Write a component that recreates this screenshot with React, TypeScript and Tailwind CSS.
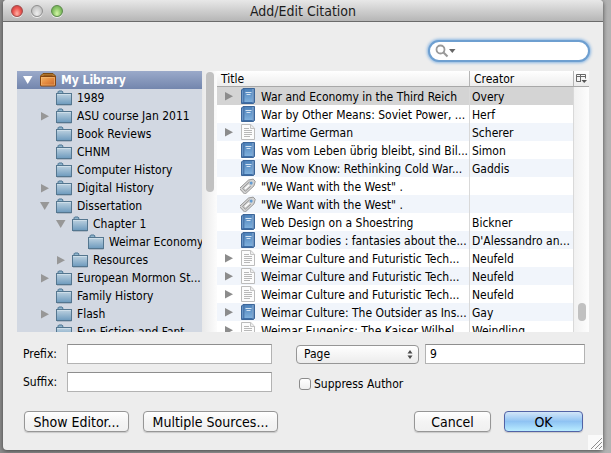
import { useState } from "react";

type Kind = "book" | "doc" | "clip";
type Twisty = "open" | "closed" | null;

const collections: { name: string; depth: number; twisty: Twisty }[] = [
  { name: "1989", depth: 1, twisty: null },
  { name: "ASU course Jan 2011", depth: 1, twisty: "closed" },
  { name: "Book Reviews", depth: 1, twisty: null },
  { name: "CHNM", depth: 1, twisty: null },
  { name: "Computer History", depth: 1, twisty: null },
  { name: "Digital History", depth: 1, twisty: "closed" },
  { name: "Dissertation", depth: 1, twisty: "open" },
  { name: "Chapter 1", depth: 2, twisty: "open" },
  { name: "Weimar Economy", depth: 3, twisty: null },
  { name: "Resources", depth: 2, twisty: "closed" },
  { name: "European Mormon St...", depth: 1, twisty: "closed" },
  { name: "Family History", depth: 1, twisty: null },
  { name: "Flash", depth: 1, twisty: "closed" },
  { name: "Fun Fiction and Fant...", depth: 1, twisty: null },
];

const items: { title: string; creator: string; kind: Kind; parent?: boolean }[] = [
  { title: "War and Economy in the Third Reich", creator: "Overy", kind: "book", parent: true },
  { title: "War by Other Means: Soviet Power, ...", creator: "Herf", kind: "book" },
  { title: "Wartime German", creator: "Scherer", kind: "doc", parent: true },
  { title: "Was vom Leben übrig bleibt, sind Bil...", creator: "Simon", kind: "book" },
  { title: "We Now Know: Rethinking Cold War...", creator: "Gaddis", kind: "book" },
  { title: '"We Want with the West" .', creator: "", kind: "clip" },
  { title: '"We Want with the West" .', creator: "", kind: "clip" },
  { title: "Web Design on a Shoestring", creator: "Bickner", kind: "book" },
  { title: "Weimar bodies : fantasies about the...", creator: "D'Alessandro an...", kind: "book" },
  { title: "Weimar Culture and Futuristic Tech...", creator: "Neufeld", kind: "doc", parent: true },
  { title: "Weimar Culture and Futuristic Tech...", creator: "Neufeld", kind: "doc", parent: true },
  { title: "Weimar Culture and Futuristic Tech...", creator: "Neufeld", kind: "doc", parent: true },
  { title: "Weimar Culture: The Outsider as Ins...", creator: "Gay", kind: "book", parent: true },
  { title: "Weimar Eugenics: The Kaiser Wilhel...", creator: "Weindling", kind: "doc", parent: true },
];

const indents: Record<number, string> = { 1: "pl-[20px]", 2: "pl-[36px]", 3: "pl-[52px]" };

function Triangle({ state, color }: { state: Twisty; color: string }) {
  return (
    <svg className="h-[16px] w-[16px] shrink-0" viewBox="0 0 16 16" aria-hidden="true">
      {state === "open" && <path d="M3 4h9.5L7.7 12z" fill={color} />}
      {state === "closed" && <path d="M4 4v8.5L12 8.2z" fill={color} />}
    </svg>
  );
}

function Folder() {
  return (
    <svg className="h-[16px] w-[16px] shrink-0" viewBox="0 0 16 16" aria-hidden="true">
      <path d="M1 15.5h14.5" stroke="#aeb9c6" />
      <path d="M2 3.5V1.8l.8-.8H6l.8.8v1.7" fill="#8fb5cd" stroke="#4c7492" />
      <rect x=".5" y="3.5" width="15" height="11" fill="url(#folder)" stroke="#54768f" />
      <path d="M1.2 4.5h13.6" stroke="#d3e2ec" strokeWidth=".8" />
    </svg>
  );
}

function LibraryBox() {
  return (
    <svg className="h-[16px] w-[16px] shrink-0" viewBox="0 0 16 16" aria-hidden="true">
      <path d="M3 1.5h10L15.5 4v1.5H.5V4z" fill="#b7792f" stroke="#7b4a12" />
      <path d="M3.5 3.3h9" stroke="#8d5719" />
      <rect x=".5" y="4.5" width="15" height="9.5" rx=".6" fill="url(#box)" stroke="#85440f" />
      <path d="M1.5 5.5h13v7.5h-13z" fill="none" stroke="#f3bd78" strokeWidth=".6" />
    </svg>
  );
}

function ItemIcon({ kind }: { kind: Kind }) {
  return (
    <svg className="h-[16px] w-[16px] shrink-0" viewBox="0 0 16 16" aria-hidden="true">
      {kind === "book" && (
        <g>
          <path d="M3 .5h11.500v14l-1 1h-12V2z" fill="#3d6da6" stroke="#3c6699" />
          <path d="M2 2.500 3.500 1v13L2 14.500z" fill="#6c98c8" />
          <path d="M4 1h8.500v13H4z" fill="url(#book)" />
          <path d="M4 1v13.500" stroke="#3a659b" strokeWidth=".6" />
          <path d="M13 1v13.500" stroke="#a6c3e2" strokeWidth=".9" />
          <path d="M5.500 4.500h6M6.500 6.500h4" stroke="#e2edf8" strokeWidth=".9" />
        </g>
      )}
      {kind === "doc" && (
        <g>
          <path d="M1.500.5h9.300l3.700 3.700v11.300h-13z" fill="#fcfcfc" stroke="#bcbcbc" />
          <path d="M10.500.8v3.700h3.700" fill="#eeeeee" stroke="#c4c4c4" />
          <path d="M4 4.500h5M4 6.500h8M4 8.500h8M4 10.500h8M4 12.500h6" stroke="#b0b0b0" strokeWidth=".9" />
        </g>
      )}
      {kind === "clip" && (
        <g transform="rotate(-43 8 8)">
          <path d="M0 4h12.500L16.500 6.500v3L12.500 12H0z" fill="#d2d2d2" stroke="#949494" strokeWidth=".9" />
          <path d="M12 6H2.500v4H10" fill="none" stroke="#8a8a8a" strokeWidth=".8" />
          <path d="M4 8h5.500" stroke="#ffffff" strokeWidth="1.500" />
          <circle cx="12.300" cy="8" r="1.500" fill="#629bd2" />
        </g>
      )}
    </svg>
  );
}

function Gradients() {
  return (
    <svg className="absolute h-0 w-0" aria-hidden="true">
      <defs>
        <linearGradient id="folder" x2="0" y2="1">
          <stop stopColor="#bfd3e1" />
          <stop offset="1" stopColor="#6d9abd" />
        </linearGradient>
        <linearGradient id="box" x2="1" y2="1">
          <stop stopColor="#f3b86a" />
          <stop offset=".5" stopColor="#e48a40" />
          <stop offset="1" stopColor="#c2642b" />
        </linearGradient>
        <linearGradient id="book" x2="0" y2="1">
          <stop stopColor="#4d82bb" />
          <stop offset="1" stopColor="#7fb0dc" />
        </linearGradient>
      </defs>
    </svg>
  );
}

function TitleBar() {
  const light = "h-[12px] w-[12px] rounded-full border shadow-[0_1px_0_#eeeeee]";
  return (
    <header className="grid h-[22px] shrink-0 grid-cols-[1fr_auto_1fr] items-center rounded-t-[4px] border-b border-[#6b6b6b] bg-linear-to-b from-[#e8e8e8] to-[#b6b6b6] px-2">
      <div className="flex gap-2">
        <button aria-label="Close" className={`${light} border-[#a14a49] bg-radial-[at_50%_75%] from-[#ffb1a5] via-[#ee5b55] to-[#b92f31]`} />
        <button aria-label="Minimize" className={`${light} border-[#8f8f8f] bg-radial-[at_50%_75%] from-[#efefef] via-[#d0d0d0] to-[#b0b0b0]`} />
        <button aria-label="Zoom" className={`${light} border-[#5b8a4a] bg-radial-[at_50%_75%] from-[#d5f7a8] via-[#8fc96b] to-[#5a9a43]`} />
      </div>
      <h1 className="text-[14px] leading-[20px] text-[#1c1c1c]">Add/Edit Citation</h1>
    </header>
  );
}

function LibraryTree() {
  return (
    <div className="flex w-[200px] shrink-0">
      <ul role="tree" aria-label="Collections" className="flex-1 overflow-hidden bg-[#d2d8e2] whitespace-nowrap">
        <li role="treeitem" aria-selected="true" className="flex h-[18px] items-center bg-linear-to-b from-[#9baaca] to-[#7386ad] pl-[3px] font-bold text-white">
          <Triangle state="open" color="#ffffff" />
          <span className="flex items-center gap-[5px] pl-1">
            <LibraryBox />
            My Library
          </span>
        </li>
        {collections.map((c) => (
          <li key={c.name} role="treeitem" className={`flex h-[18px] items-center ${indents[c.depth]}`}>
            <Triangle state={c.twisty} color="#979797" />
            <span className="flex items-center gap-[5px] pl-[3px]">
              <Folder />
              {c.name}
            </span>
          </li>
        ))}
      </ul>
      <div className="w-[15px] bg-linear-to-r from-[#e9e9e9] to-[#fcfcfc] pt-px pl-1">
        <div className="h-[120px] w-[8px] rounded-full bg-[#c1c1c1]" />
      </div>
    </div>
  );
}

function ItemTable() {
  return (
    <div className="flex min-w-0 flex-1 overflow-hidden bg-white">
      <div className="min-w-0 flex-1 overflow-hidden">
        <table className="w-full table-fixed border-separate border-spacing-0 whitespace-nowrap">
          <thead>
            <tr className="bg-linear-to-b from-white to-[#ececec] text-left">
              <th className="border-b border-[#a8a8a8] p-0 font-normal">
                <div className="h-[15px] border-r border-[#b5b5b5] pl-1 leading-[16px]">Title</div>
              </th>
              <th className="w-[104px] border-b border-[#a8a8a8] p-0 font-normal">
                <div className="h-[15px] border-r border-[#b5b5b5] pl-1 leading-[16px]">Creator</div>
              </th>
            </tr>
          </thead>
          <tbody>
            {items.map((item, i) => (
              <tr key={i} className={i === 0 ? "bg-[#d4d4d4]" : i % 2 === 0 ? "bg-[#f1f5fb]" : "bg-white"}>
                <td className="h-[18px] p-0">
                  <div className="flex h-[18px] items-start border-r border-[#d9d9d9] pt-px pl-1">
                    <Triangle state={item.parent ? "closed" : null} color="#8c8c8c" />
                    <span className="flex items-start gap-[5px] pl-[3px]">
                      <ItemIcon kind={item.kind} />
                      {item.title}
                    </span>
                  </div>
                </td>
                <td className="h-[18px] p-0">
                  <div className="h-[18px] border-r border-[#d9d9d9] pt-px pl-[2px]">{item.creator}</div>
                </td>
              </tr>
            ))}
          </tbody>
        </table>
      </div>
      <div className="flex w-[15px] shrink-0 flex-col">
        <button aria-label="Choose columns" className="flex h-[16px] shrink-0 items-center justify-center border-b border-[#a8a8a8] bg-linear-to-b from-white to-[#ececec]">
          <svg className="h-[11px] w-[11px]" viewBox="0 0 11 11" fill="none" stroke="#686868" aria-hidden="true">
            <path d="M5 8.500H.5v-7h9v4M.5 3.500h9M4.500 1.500v7" />
            <path d="M5.500 7H11l-2.800 3z" fill="#555555" stroke="none" />
          </svg>
        </button>
        <div className="flex flex-1 flex-col justify-end bg-linear-to-r from-[#f1f1f1] to-[#fdfdfd] pb-[11px] pl-1">
          <div className="h-[18px] w-[8px] rounded-full bg-[#c1c1c1]" />
        </div>
      </div>
    </div>
  );
}

export default function App() {
  const [prefix, setPrefix] = useState("");
  const [suffix, setSuffix] = useState("");
  const [page, setPage] = useState("9");
  const [suppress, setSuppress] = useState(false);
  const field = "h-[20px] w-full border border-[#b3b3b3] border-t-[#8e8e8e] bg-white px-1 outline-none";
  const button =
    "h-[21px] rounded-[4px] border border-[#969696] bg-linear-to-b from-white via-[#f4f4f4] to-[#f0f0f0] text-center text-[14px] leading-[18px] shadow-[0_1px_1px_#c8c8c8]";

  return (
    <div className="h-screen min-h-[400px] bg-linear-to-r from-[#8b8b8b] to-[#b3b3b3] pr-2 pb-[3px] pl-[3px] font-['DejaVu_Sans_Condensed','Lucida_Grande',sans-serif] text-[12px] leading-[18px] text-black">
      <Gradients />
      <div className="flex h-full flex-col rounded-[4px] bg-[#ededed] shadow-[0_1px_4px_#444444]">
        <TitleBar />
        <div className="flex shrink-0 justify-end pt-[18px] pr-[13px] pb-[9px]">
          <label className="flex h-[22px] w-[162px] items-center rounded-full border-2 border-[#6e9fd0] bg-white pl-[5px] shadow-[0_0_3px_1px_#8ab6e2]">
            <svg className="h-[14px] w-[22px] shrink-0" viewBox="0 0 22 14" aria-hidden="true">
              <circle cx="5.500" cy="5.500" r="4" fill="none" stroke="#999999" strokeWidth="1.800" />
              <path d="m8.500 8.500 4 4" stroke="#999999" strokeWidth="2.200" />
              <path d="M14 5h6.500l-3.200 4z" fill="#666666" />
            </svg>
            <input aria-label="Search" type="text" className="min-w-0 flex-1 bg-transparent outline-none" />
          </label>
        </div>
        <main className="flex min-h-0 flex-1 px-[14px]">
          <LibraryTree />
          <ItemTable />
        </main>
        <form className="shrink-0" onSubmit={(e) => e.preventDefault()}>
          <div className="flex gap-6 pt-3 pr-[18px] pl-5">
            <div className="grid flex-[249] grid-cols-[44px_1fr] items-center gap-y-2">
              <label htmlFor="prefix">Prefix:</label>
              <input id="prefix" className={field} value={prefix} onChange={(e) => setPrefix(e.target.value)} />
              <label htmlFor="suffix">Suffix:</label>
              <input id="suffix" className={field} value={suffix} onChange={(e) => setSuffix(e.target.value)} />
            </div>
            <div className="flex flex-[289] flex-col gap-3">
              <div className="flex items-center gap-[6px]">
                <div className="grid w-[123px] shrink-0 items-center">
                  <select aria-label="Locator type" className="col-start-1 row-start-1 h-[19px] appearance-none rounded-[4px] border border-[#969696] bg-linear-to-b from-white to-[#ececec] pl-[7px] leading-[17px] outline-none">
                    <option>Page</option>
                    <option>Chapter</option>
                    <option>Volume</option>
                  </select>
                  <svg className="pointer-events-none col-start-1 row-start-1 mr-[6px] h-[9px] w-[6px] justify-self-end" viewBox="0 0 6 9" aria-hidden="true">
                    <path d="M.5 3.500 3 0l2.500 3.500zM.5 5.500 3 9l2.500-3.500z" fill="#4b4b4b" />
                  </svg>
                </div>
                <input aria-label="Locator" className={field} value={page} onChange={(e) => setPage(e.target.value)} />
              </div>
              <label className="flex items-center gap-[3px] pl-[3px] leading-[16px]">
                <input type="checkbox" checked={suppress} onChange={(e) => setSuppress(e.target.checked)} className="h-[12px] w-[12px] appearance-none rounded-[3px] border border-[#8b8b8b] bg-linear-to-b from-white to-[#efefef] checked:bg-[#73a9df]" />
                Suppress Author
              </label>
            </div>
          </div>
          <div className="flex pt-[19px] pr-5 pl-[21px]">
            <div className="flex gap-[14px]">
              <button type="button" className={`${button} w-[105px]`}>Show Editor...</button>
              <button type="button" className={`${button} w-[135px]`}>Multiple Sources...</button>
            </div>
            <div className="ml-auto flex gap-[13px]">
              <button type="button" className={`${button} w-[77px]`}>Cancel</button>
              <button type="submit" className="h-[21px] w-[79px] rounded-[4px] border border-[#5263a6] bg-linear-to-b from-[#d3e6f8] via-[#8fc3f3] to-[#b9ecff] text-[14px] leading-[18px] shadow-[0_1px_1px_#c8c8c8]">OK</button>
            </div>
          </div>
          <div className="flex justify-end pt-[3px]">
            <svg className="h-[15px] w-[15px]" viewBox="0 0 15 15" aria-hidden="true">
              <path d="M0 0h15v15H0z" fill="#fafafa" />
              <path d="M3 14 14 3M7 14l7-7M11 14l3-3" stroke="#8d8d8d" />
            </svg>
          </div>
        </form>
      </div>
    </div>
  );
}
